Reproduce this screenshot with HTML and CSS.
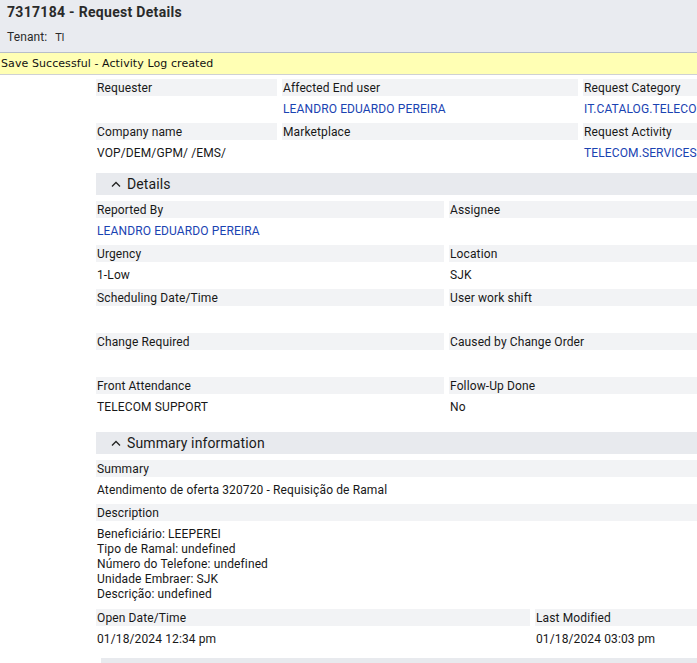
FILE: index.html
```html
<!DOCTYPE html>
<html lang="en">
<head>
<meta charset="utf-8">
<title>7317184 - Request Details</title>
<link rel="stylesheet" href="styles.css">
</head>
<body>
<header class="page-head">
  <h1 class="title">7317184 - Request Details</h1>
  <div class="tenant">Tenant: <span class="tenant-val">TI</span></div>
</header>
<div class="notice">Save Successful - Activity Log created</div>
<main class="content">
  <div class="grid g3">
    <div class="field"><div class="label">Requester</div><div class="value"></div></div>
    <div class="field"><div class="label">Affected End user</div><div class="value link">LEANDRO EDUARDO PEREIRA</div></div>
    <div class="field"><div class="label">Request Category</div><div class="value link">IT.CATALOG.TELECOM</div></div>
    <div class="field"><div class="label">Company name</div><div class="value">VOP/DEM/GPM/ /EMS/</div></div>
    <div class="field"><div class="label">Marketplace</div><div class="value"></div></div>
    <div class="field"><div class="label">Request Activity</div><div class="value link">TELECOM.SERVICES</div></div>
  </div>

  <section class="section sec-details">
    <div class="sec-head"><svg class="chev" width="10" height="6" viewBox="0 0 10 6"><polyline points="1,5.5 5,1.5 9,5.5" fill="none" stroke="#222" stroke-width="1.3"/></svg>Details</div>
    <div class="grid g2">
      <div class="field"><div class="label">Reported By</div><div class="value link">LEANDRO EDUARDO PEREIRA</div></div>
      <div class="field"><div class="label">Assignee</div><div class="value"></div></div>
      <div class="field"><div class="label">Urgency</div><div class="value">1-Low</div></div>
      <div class="field"><div class="label">Location</div><div class="value">SJK</div></div>
      <div class="field"><div class="label">Scheduling Date/Time</div><div class="value"></div></div>
      <div class="field"><div class="label">User work shift</div><div class="value"></div></div>
      <div class="field"><div class="label">Change Required</div><div class="value"></div></div>
      <div class="field"><div class="label">Caused by Change Order</div><div class="value"></div></div>
      <div class="field"><div class="label">Front Attendance</div><div class="value">TELECOM SUPPORT</div></div>
      <div class="field"><div class="label">Follow-Up Done</div><div class="value">No</div></div>
    </div>
  </section>

  <section class="section sec-summary">
    <div class="sec-head"><svg class="chev" width="10" height="6" viewBox="0 0 10 6"><polyline points="1,5.5 5,1.5 9,5.5" fill="none" stroke="#222" stroke-width="1.3"/></svg>Summary information</div>
    <div class="field"><div class="label">Summary</div><div class="value">Atendimento de oferta 320720 - Requisição de Ramal</div></div>
    <div class="field"><div class="label">Description</div><div class="value multi">Beneficiário: LEEPEREI<br>Tipo de Ramal: undefined<br>Número do Telefone: undefined<br>Unidade Embraer: SJK<br>Descrição: undefined</div></div>
    <div class="grid gd">
      <div class="field"><div class="label">Open Date/Time</div><div class="value">01/18/2024 12:34 pm</div></div>
      <div class="field"><div class="label">Last Modified</div><div class="value">01/18/2024 03:03 pm</div></div>
    </div>
  </section>
  <div class="next-bar"></div>
</main>
</body>
</html>
```

FILE: styles.css
```css
html, body {
  margin: 0;
  padding: 0;
  overflow: hidden;
  background: #ffffff;
}
body {
  font-family: Roboto, "Liberation Sans", sans-serif;
  font-size: 12px;
  letter-spacing: 0.12px;
  color: #181818;
}
.page-head {
  background: #e9ebf0;
  height: 52px;
  box-sizing: border-box;
  padding: 4px 7px 0;
  display: flex;
  flex-direction: column;
  gap: 8px;
}
.title {
  margin: 0;
  font-size: 14px;
  font-weight: bold;
  line-height: 17px;
  letter-spacing: 0.3px;
  color: #2a2a2a;
}
.tenant {
  line-height: 17px;
  color: #2a2a2a;
}
.tenant-val {
  font-family: "DejaVu Sans", sans-serif;
  font-size: 10px;
  margin-left: 5px;
  letter-spacing: 0;
}
.notice {
  border-top: 1px solid #b7bec9;
  border-bottom: 1px solid #cfd1d4;
  background: #ffffb4;
  height: 21px;
  line-height: 22px;
  padding-left: 1px;
  font-family: "DejaVu Sans", sans-serif;
  font-size: 11px;
  letter-spacing: 0.08px;
  color: #111;
}
.content {
  padding: 4px 0 0 96px;
}
.grid {
  display: grid;
  column-gap: 5px;
}
.g3 { grid-template-columns: 181px 296px 1fr; }
.g2 { grid-template-columns: 348px 1fr; }
.gd { grid-template-columns: 434px 1fr; }
.field {
  display: flex;
  flex-direction: column;
  min-width: 0;
}
.label {
  background: #f2f3f5;
  height: 17px;
  box-sizing: border-box;
  padding: 1px 0 0 1px;
  line-height: 16px;
  white-space: nowrap;
}
.value {
  height: 27px;
  box-sizing: border-box;
  padding: 5px 0 0 1px;
  line-height: 17px;
  white-space: nowrap;
}
.value.multi {
  height: auto;
  padding: 6px 0 7px 1px;
  line-height: 15px;
}
.link { color: #1a43b2; }
.section { margin-top: 6px; }
.sec-summary { margin-top: 11px; }
.sec-head {
  background: #e8eaee;
  height: 22px;
  display: flex;
  align-items: center;
  padding-left: 15px;
  font-size: 14px;
  color: #1a1a1a;
  margin-bottom: 6px;
}
.chev { margin-right: 6px; }
.next-bar {
  margin: 5px 0 0 5px;
  height: 12px;
  background: #e8eaee;
}
```
